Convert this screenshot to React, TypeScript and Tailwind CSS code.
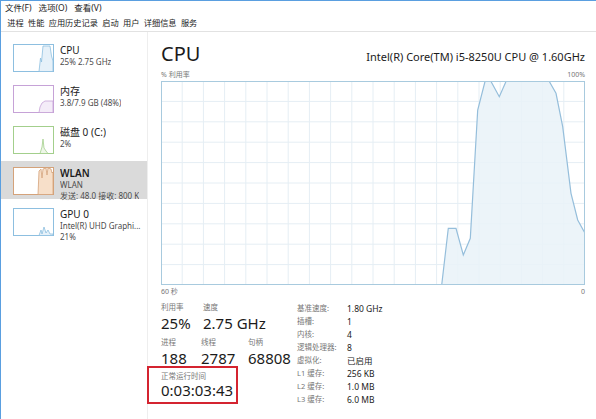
import React from "react"

// points of the big CPU graph, in graph pixels (424 x 204)
const cpuPoints: [number, number][] = [
  [280.7, 204], [287.3, 147.3], [295, 147.3], [302.3, 174], [309.3, 157.3],
  [316.7, 29], [324, 0.5], [330, 0.5], [338.3, 15.7], [345, 0.5], [388.3, 0.5],
  [395, 12.3], [401.7, 45.7], [410, 112.3], [416.7, 139], [424, 152.3],
]

function CpuGraph() {
  const w = 424
  const h = 204
  const line = cpuPoints.map(([x, y]) => `${x},${y}`).join(" ")
  const area = `${line} ${w},${h} 280.7,${h}`
  const cols = Array.from({ length: 19 }, (_, i) => ((i + 1) * w) / 20)
  const rows = Array.from({ length: 9 }, (_, i) => ((i + 1) * h) / 10)
  return (
    <svg width={w} height={h} viewBox={`0 0 ${w} ${h}`} className="block">
      {cols.map((x) => (
        <line key={"c" + x} x1={x} y1={0} x2={x} y2={h} stroke="#e5eef4" strokeWidth={1} />
      ))}
      {rows.map((y) => (
        <line key={"r" + y} x1={0} y1={y} x2={w} y2={y} stroke="#e5eef4" strokeWidth={1} />
      ))}
      <polygon points={area} fill="#e9f2f8" fillOpacity={0.85} />
      <polyline points={line} fill="none" stroke="#95bedb" strokeWidth={1.2} />
      <rect x={0.5} y={0.5} width={w - 1} height={h - 1} fill="none" stroke="#a8cade" />
    </svg>
  )
}

type ThumbProps = { border: string; fill: string; points: string }

function Thumb({ border, fill, points }: ThumbProps) {
  return (
    <svg width={41} height={28} viewBox="0 0 41 28" className="block shrink-0">
      <rect x={0.5} y={0.5} width={40} height={27} fill="#fff" stroke={border} />
      <polygon points={points} fill={fill} stroke={border} strokeWidth={0.8} />
    </svg>
  )
}

type SideItemProps = {
  title: string
  lines: string[]
  thumb: ThumbProps
  selected?: boolean
  bold?: boolean
}

function SideItem({ title, lines, thumb, selected, bold }: SideItemProps) {
  return (
    <div className={`flex h-[38px] items-start pl-[12px] pt-[6px] ${selected ? "bg-[#dadada]" : ""}`}>
      <Thumb {...thumb} />
      <div className="ml-[6px] flex min-w-0 flex-col overflow-hidden">
        <span className={`text-[10px] leading-[12px] text-[#1b1b1b] ${bold ? "font-semibold" : ""}`}>{title}</span>
        {lines.map((l) => (
          <span key={l} className="whitespace-nowrap text-[8px] leading-[11px] text-[#4b4b4b]">
            {l}
          </span>
        ))}
      </div>
    </div>
  )
}

function Stat({ label, value, w }: { label: string; value: string; w?: string }) {
  return (
    <div className={`flex flex-col ${w ?? ""}`}>
      <span className="text-[7.5px] leading-[10px] text-[#777]">{label}</span>
      <span className="mt-[3px] whitespace-nowrap text-[15px] leading-[17px] text-[#1b1b1b]">{value}</span>
    </div>
  )
}

const specs: [string, string][] = [
  ["基准速度:", "1.80 GHz"],
  ["插槽:", "1"],
  ["内核:", "4"],
  ["逻辑处理器:", "8"],
  ["虚拟化:", "已启用"],
  ["L1 缓存:", "256 KB"],
  ["L2 缓存:", "1.0 MB"],
  ["L3 缓存:", "6.0 MB"],
]

export default function App() {
  return (
    <div className="flex h-[419px] w-[596px] flex-col overflow-hidden border-t border-l border-[#5a9fe0] bg-white font-[family-name:'Noto_Sans','Noto_Sans_CJK_SC',sans-serif] text-[#1b1b1b]">
      {/* menu bar */}
      <div className="flex h-[14px] items-center gap-[7px] pl-[4px] text-[8.5px] text-[#222]">
        <span>文件(F)</span>
        <span>选项(O)</span>
        <span>查看(V)</span>
      </div>

      {/* tabs */}
      <div className="flex h-[17px] items-center border-b border-[#e2e2e2] pl-[4px] text-[8.2px] text-[#222]">
        {["进程", "性能", "应用历史记录", "启动", "用户", "详细信息", "服务"].map((t) => (
          <span key={t} className="px-[2.2px]">
            {t}
          </span>
        ))}
      </div>

      <div className="flex flex-1">
        {/* sidebar */}
        <div className="flex w-[147px] shrink-0 flex-col gap-[3px] border-r border-[#eeeeee] pt-[6px]">
          <SideItem
            title="CPU"
            lines={["25% 2.75 GHz"]}
            thumb={{ border: "#8dbfe0", fill: "#e6f1f9", points: "26,27.5 27.5,14 28.5,18 30,2 37,2 38.5,12 40,17 40,27.5" }}
          />
          <SideItem
            title="内存"
            lines={["3.8/7.9 GB (48%)"]}
            thumb={{ border: "#c6a2d7", fill: "#f4ecf8", points: "26,27.5 27,22 29,18 32,16 40,16 40,27.5" }}
          />
          <SideItem
            title="磁盘 0 (C:)"
            lines={["2%"]}
            thumb={{ border: "#a3cf8c", fill: "#eef7e8", points: "27,27.5 29,21 30,13 31,22 33,25 35,27.5" }}
          />
          <SideItem
            selected
            bold
            title="WLAN"
            lines={["WLAN", "发送: 48.0 接收: 800 K"]}
            thumb={{ border: "#d4a27a", fill: "#f7dfc9", points: "25,27.5 26,4 28,2 29,11 30,2 33,1 34,8 35,1 38,2 39,6 40,5 40,27.5" }}
          />
          <SideItem
            title="GPU 0"
            lines={["Intel(R) UHD Graphi...", "21%"]}
            thumb={{ border: "#8dbfe0", fill: "#e6f1f9", points: "26,27.5 28,22 29,26 31,19 33,25 35,22 37,26 40,26 40,27.5" }}
          />
        </div>

        {/* main panel */}
        <div className="flex flex-1 flex-col pl-[13px] pr-[11px] pt-[11px]">
          <div className="flex items-baseline justify-between">
            <span className="text-[20px] leading-[22px]">CPU</span>
            <span className="text-[11px] text-[#1b1b1b]">Intel(R) Core(TM) i5-8250U CPU @ 1.60GHz</span>
          </div>

          <div className="mt-[4px] flex justify-between text-[7px] leading-[9px] text-[#777]">
            <span>% 利用率</span>
            <span>100%</span>
          </div>
          <div className="mt-[2px]">
            <CpuGraph />
          </div>
          <div className="mt-[2px] flex justify-between text-[7px] leading-[9px] text-[#777]">
            <span>60 秒</span>
            <span>0</span>
          </div>

          <div className="mt-[6px] flex">
            <div className="flex w-[136px] flex-col">
              <div className="flex">
                <Stat w="w-[42px]" label="利用率" value="25%" />
                <Stat label="速度" value="2.75 GHz" />
              </div>
              <div className="mt-[5px] flex">
                <Stat w="w-[40px]" label="进程" value="188" />
                <Stat w="w-[47px]" label="线程" value="2787" />
                <Stat label="句柄" value="68808" />
              </div>
              <div className="-ml-[14px] mt-[-1px] flex h-[38px] w-[91px] flex-col border-2 border-[#d42430] pl-[12px] pt-[3px]">
                <span className="text-[7.5px] leading-[10px] text-[#777]">正常运行时间</span>
                <span className="mt-[1px] whitespace-nowrap text-[15px] leading-[17px] text-[#1b1b1b]">0:03:03:43</span>
              </div>
            </div>

            <div className="grid grid-cols-[50px_auto] content-start">
              {specs.map(([k, v]) => (
                <React.Fragment key={k}>
                  <span className="text-[7.5px] leading-[13px] text-[#777]">{k}</span>
                  <span className="text-[8.5px] leading-[13px] text-[#1b1b1b]">{v}</span>
                </React.Fragment>
              ))}
            </div>
          </div>
        </div>
      </div>
    </div>
  )
}
